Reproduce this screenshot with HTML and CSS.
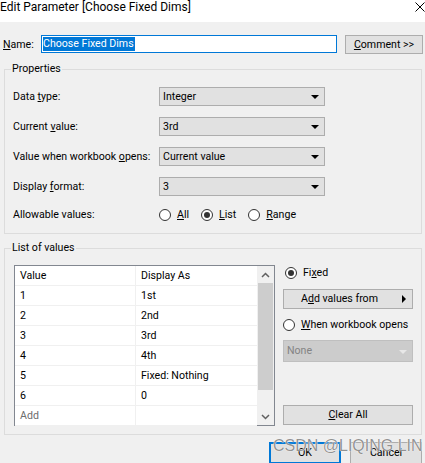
FILE: index.html
```html
<!DOCTYPE html>
<html lang="en">
<head>
	<meta charset="UTF-8">
	<title>Edit Parameter [Choose Fixed Dims]</title>
	<link rel="stylesheet" href="styles.css">
</head>
<body>
	<div class="window">
		<div class="titlebar">
			<span class="title">Edit Parameter [Choose Fixed Dims]</span>
			<svg class="close" width="10" height="10" viewBox="0 0 10 10">
				<path d="M0.5 0.5L9.5 9.5M9.5 0.5L0.5 9.5" stroke="#000" stroke-width="1" fill="none"/>
			</svg>
		</div>

		<div class="name-row">
			<label class="name-label"><u>N</u>ame:</label>
			<div class="name-input"><span class="selected">Choose Fixed Dims</span></div>
			<button class="btn comment"><u>C</u>omment &gt;&gt;</button>
		</div>

		<fieldset class="group props">
			<legend>Properties</legend>
			<div class="prop-grid">
				<span class="prop-label">Data <u>t</u>ype:</span>
				<div class="combo">Integer<span class="arrow"></span></div>

				<span class="prop-label">Current <u>v</u>alue:</span>
				<div class="combo">3rd<span class="arrow"></span></div>

				<span class="prop-label">Value when workbook <u>o</u>pens:</span>
				<div class="combo">Current value<span class="arrow"></span></div>

				<span class="prop-label">Display <u>f</u>ormat:</span>
				<div class="combo">3<span class="arrow"></span></div>

				<span class="prop-label radio-label">Allowable values:</span>
				<div class="radio-group">
					<span class="radio"><span class="dot"></span><span><u>A</u>ll</span></span>
					<span class="radio checked"><span class="dot"></span><span><u>L</u>ist</span></span>
					<span class="radio"><span class="dot"></span><span><u>R</u>ange</span></span>
				</div>
			</div>
		</fieldset>

		<fieldset class="group values">
			<legend>List of values</legend>
			<div class="values-body">
				<div class="list">
					<div class="cells">
						<div class="cell">Value</div><div class="cell">Display As</div>
						<div class="cell">1</div><div class="cell">1st</div>
						<div class="cell">2</div><div class="cell">2nd</div>
						<div class="cell">3</div><div class="cell">3rd</div>
						<div class="cell">4</div><div class="cell">4th</div>
						<div class="cell">5</div><div class="cell">Fixed: Nothing</div>
						<div class="cell">6</div><div class="cell">0</div>
						<div class="cell add">Add</div><div class="cell"></div>
					</div>
					<div class="scrollbar">
						<div class="sb-btn">
							<svg width="9" height="6" viewBox="0 0 9 6"><path d="M1 5L4.5 1.5L8 5" stroke="#606060" stroke-width="1.5" fill="none"/></svg>
						</div>
						<div class="sb-track"><div class="sb-thumb"></div></div>
						<div class="sb-btn">
							<svg width="9" height="6" viewBox="0 0 9 6"><path d="M1 1L4.5 4.5L8 1" stroke="#606060" stroke-width="1.5" fill="none"/></svg>
						</div>
					</div>
				</div>

				<div class="side">
					<span class="radio checked fixed"><span class="dot"></span><span>Fi<u>x</u>ed</span></span>
					<button class="btn add-from"><span>A<u>d</u>d values from</span><span class="arrow-right"></span></button>
					<span class="radio when"><span class="dot"></span><span><u>W</u>hen workbook opens</span></span>
					<div class="combo disabled">None<span class="arrow"></span></div>
					<button class="btn clear"><u>C</u>lear All</button>
				</div>
			</div>
		</fieldset>

		<div class="footer">
			<button class="btn ok">OK</button>
			<button class="btn cancel">Cancel</button>
		</div>

		<div class="watermark">CSDN @LIQING LIN</div>
	</div>
</body>
</html>
```

FILE: styles.css
```css
* {
	box-sizing: border-box;
}

body {
	margin: 0;
	background: #f0f0f0;
	font-family: Roboto, "Noto Sans", sans-serif;
	font-size: 10.6px;
	color: #000;
}

.window {
	position: relative;
	width: 425px;
	height: 463px;
	overflow: hidden;
	background-color: #f0f0f0;
}

.titlebar {
	height: 22px;
	background-color: #fff;
	display: flex;
	justify-content: space-between;
	align-items: flex-start;
}

.title {
	font-size: 12px;
	line-height: 15px;
}

.close {
	margin-top: 2px;
}

u {
	text-decoration: underline;
	text-underline-offset: 1px;
}

.btn {
	font: inherit;
	color: #000;
	background-color: #e1e1e1;
	border: 1px solid #adadad;
	padding: 0;
	margin: 0;
	line-height: 16px;
	white-space: nowrap;
}

/* name row */
.name-row {
	display: flex;
	align-items: flex-start;
	margin-top: 13px;
	padding-left: 3px;
}

.name-label {
	width: 38px;
	line-height: 19px;
}

.name-input {
	width: 296px;
	height: 18px;
	border: 1px solid #0078d7;
	background-color: #fff;
	padding: 1px 1px;
	line-height: 14px;
}

.selected {
	display: inline-block;
	background-color: #0078d7;
	color: #fff;
	padding-right: 1px;
}

.comment {
	width: 78px;
	height: 19px;
	margin-left: 8px;
}

/* group boxes */
.group {
	margin: 7px 3px 0 4px;
	padding: 0 6px;
	border: 1px solid #dcdcdc;
	min-width: 0;
}

.group legend {
	padding: 0 1px;
	line-height: 16px;
}

.props {
	padding-top: 10px;
	padding-bottom: 10px;
}

.prop-grid {
	display: grid;
	grid-template-columns: 146px 166px;
	grid-template-rows: 30px 30px 30px 30px 16px;
	padding-left: 2px;
}

.prop-label {
	line-height: 20px;
	white-space: nowrap;
}

.prop-grid .radio-label {
	line-height: 16px;
}

.combo {
	position: relative;
	height: 19px;
	line-height: 17px;
	padding-left: 3px;
	background-color: #e1e1e1;
	border: 1px solid #adadad;
}

.arrow {
	position: absolute;
	right: 5px;
	top: 7px;
	border-left: 4px solid transparent;
	border-right: 4px solid transparent;
	border-top: 4px solid #000;
}

.combo.disabled {
	height: 22px;
	line-height: 20px;
	color: #838383;
	background-color: #cccccc;
	border-color: #bfbfbf;
}

.combo.disabled .arrow {
	top: 9px;
	border-top-color: #e8e8e8;
}

.radio-group {
	display: flex;
	gap: 12px;
}

.radio {
	display: flex;
	align-items: center;
	gap: 6px;
	line-height: 16px;
	white-space: nowrap;
}

.dot {
	flex: none;
	width: 12px;
	height: 12px;
	border: 1px solid #333;
	border-radius: 50%;
	background-color: #fff;
	position: relative;
}

.radio.checked .dot::after {
	content: "";
	position: absolute;
	left: 2px;
	top: 2px;
	width: 6px;
	height: 6px;
	border-radius: 50%;
	background-color: #333;
}

/* list of values */
.values {
	margin-top: 6px;
	padding-top: 9px;
	padding-bottom: 8px;
}

.values-body {
	display: flex;
	gap: 8px;
	padding-left: 3px;
}

.list {
	display: flex;
	width: 261px;
	height: 161px;
	border: 1px solid #828790;
	background-color: #fff;
}

.cells {
	display: grid;
	grid-template-columns: 121px 121px;
	grid-auto-rows: 20px;
	align-content: start;
}

.cell {
	padding-left: 5px;
	line-height: 19px;
	border-bottom: 1px solid #f0f0f0;
}

.cell:nth-child(odd) {
	border-right: 1px solid #f0f0f0;
}

.cell.add {
	color: #6d6d6d;
}

.scrollbar {
	width: 17px;
	display: flex;
	flex-direction: column;
	background-color: #f0f0f0;
}

.sb-btn {
	height: 17px;
	display: flex;
	align-items: center;
	justify-content: center;
}

.sb-track {
	flex: 1;
}

.sb-thumb {
	height: 107px;
	margin: 0 1px;
	background-color: #cdcdcd;
}

.side {
	width: 130px;
	display: flex;
	flex-direction: column;
	align-items: stretch;
}

.radio.fixed {
	margin-left: 2px;
}

.add-from {
	display: flex;
	align-items: center;
	height: 20px;
	margin-top: 8px;
	padding: 0 6px 0 17px;
}

.arrow-right {
	margin-left: auto;
	border-top: 4px solid transparent;
	border-bottom: 4px solid transparent;
	border-left: 4px solid #000;
}

.radio.when {
	margin-top: 8px;
}

.side .combo.disabled {
	margin-top: 7px;
}

.clear {
	height: 20px;
	margin-top: auto;
	margin-bottom: 1px;
}

/* footer */
.footer {
	display: flex;
	justify-content: flex-end;
	gap: 9px;
	margin-top: 7px;
	padding-right: 3px;
}

.footer .btn {
	width: 72px;
	height: 22px;
}

.ok {
	border: 2px solid #0078d7;
}

.watermark {
	position: absolute;
	left: 273px;
	top: 437px;
	white-space: nowrap;
	font-family: "Liberation Sans", Arial, sans-serif;
	font-size: 16px;
	color: rgba(110, 110, 110, 0.75);
	text-shadow: 0 0 1px #fff, 0 0 1px #fff;
}
```
